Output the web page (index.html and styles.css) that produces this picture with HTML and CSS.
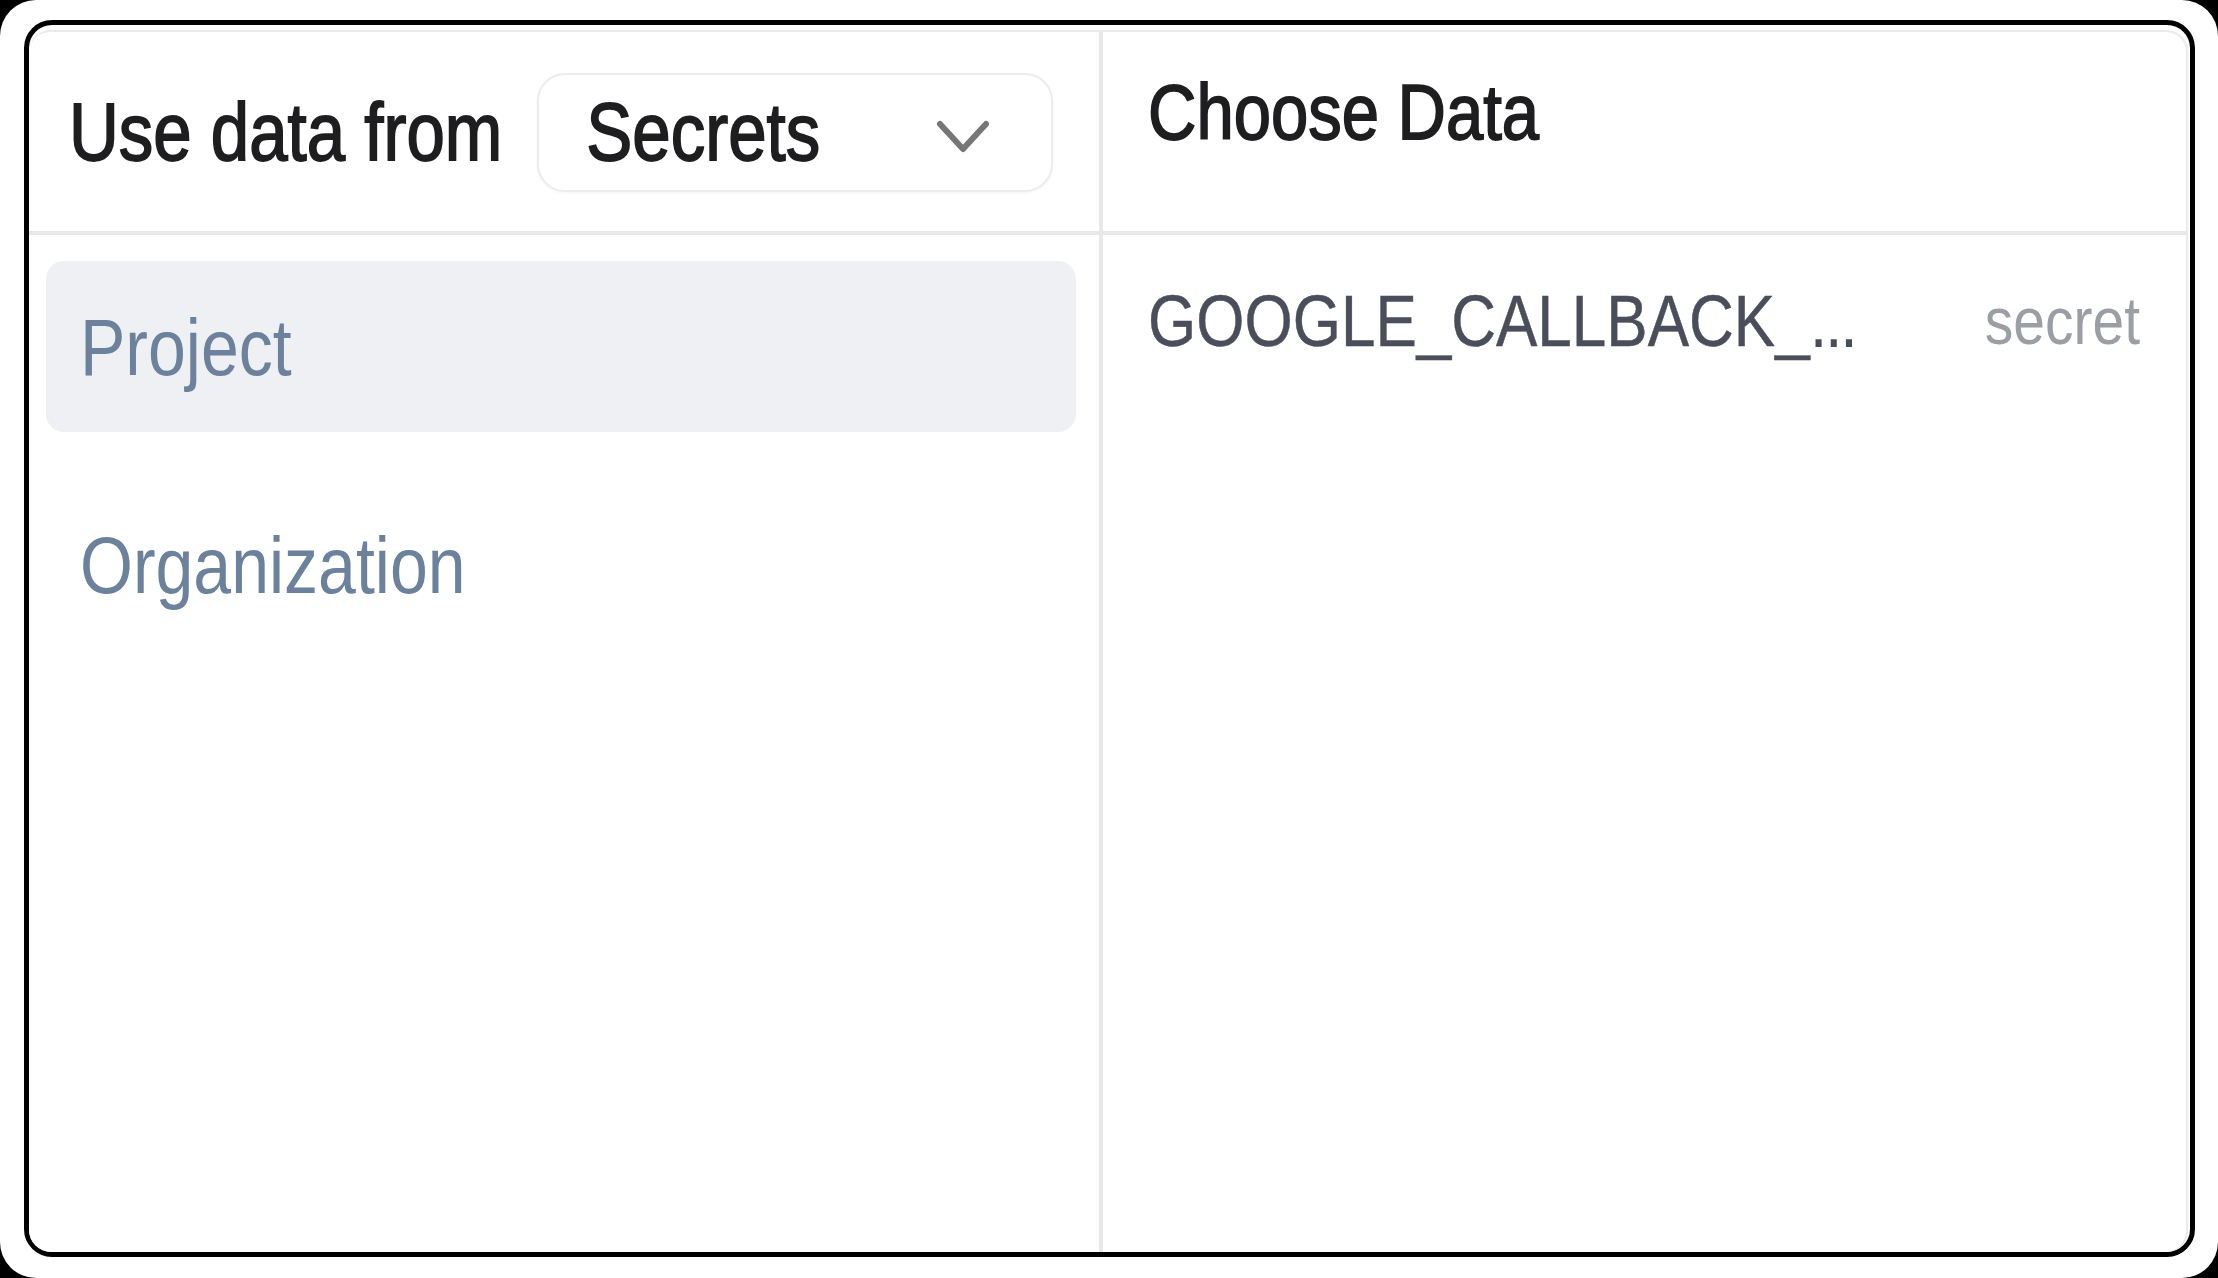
FILE: index.html
```html
<!DOCTYPE html>
<html lang="en">
<head>
<meta charset="utf-8">
<title>Choose Data</title>
<link rel="stylesheet" href="styles.css">
</head>
<body>
<div class="frame">
  <div class="outline">
    <div class="card">
      <div class="col col-left">
        <div class="head head-left">
          <span class="t label">Use data from</span>
          <div class="select">
            <span class="t select-value">Secrets</span>
            <svg class="chev" width="56" height="38" viewBox="0 0 56 38" aria-hidden="true">
              <polyline points="5,6 28,31 51,6" fill="none" stroke="#767678" stroke-width="6" stroke-linecap="round" stroke-linejoin="round"/>
            </svg>
          </div>
        </div>
        <div class="list">
          <div class="item active"><span class="t item-text">Project</span></div>
          <div class="item"><span class="t item-text">Organization</span></div>
        </div>
      </div>
      <div class="col col-right">
        <div class="head head-right">
          <span class="t title">Choose Data</span>
        </div>
        <div class="rows">
          <div class="row">
            <span class="t name">GOOGLE_CALLBACK_<span class="dots">…</span></span>
            <span class="t kind">secret</span>
          </div>
        </div>
      </div>
    </div>
  </div>
</div>
</body>
</html>
```

FILE: styles.css
```css
* { box-sizing: border-box; }

html, body {
  margin: 0;
  padding: 0;
  background: #000;
}

body {
  width: 2218px;
  height: 1278px;
  overflow: hidden;
  font-family: "Liberation Sans", Arial, sans-serif;
}

.frame {
  width: 2218px;
  height: 1278px;
  background: #fff;
  border-radius: 36px;
  padding: 20px 23px 21px 24px;
}

.outline {
  width: 100%;
  height: 100%;
  border: 5px solid #000;
  border-radius: 28px;
  padding: 5px 2px 0 0;
  background: #fff;
}

.card {
  width: 100%;
  height: 100%;
  border: 2px solid #ebebeb;
  border-left: none;
  border-bottom: none;
  border-radius: 22px;
  box-shadow: 0 0 3px rgba(0, 0, 0, 0.06);
  display: flex;
  overflow: hidden;
  background: #fff;
}

.col {
  display: flex;
  flex-direction: column;
  height: 100%;
}

.col-left {
  width: 1074px;
  flex: none;
  border-right: 4px solid #e8e8e8;
}

.col-right {
  flex: 1;
  min-width: 0;
}

.head {
  height: 203px;
  flex: none;
  border-bottom: 4px solid #e8e8e8;
  display: flex;
}

.t {
  display: inline-block;
  transform: scaleY(1.17);
  line-height: 1;
  white-space: nowrap;
}

.head-left {
  align-items: center;
  padding: 2px 0 0 40px;
}

.label {
  font-size: 69px;
  color: #1e1e20;
  -webkit-text-stroke: 1.5px #1e1e20;
}

.select {
  margin-left: 35px;
  width: 516px;
  height: 119px;
  border: 2px solid #ececec;
  border-radius: 28px;
  box-shadow: 0 1px 3px rgba(0, 0, 0, 0.05);
  display: flex;
  align-items: center;
  justify-content: space-between;
  padding: 0 60px 0 47px;
}

.select-value {
  font-size: 69px;
  color: #1e1e20;
  -webkit-text-stroke: 1.5px #1e1e20;
}

.chev {
  display: block;
  margin-top: 8px;
}

.head-right {
  align-items: flex-start;
  padding: 46px 0 0 45px;
}

.title {
  font-size: 67px;
  color: #1e1e20;
  -webkit-text-stroke: 1.5px #1e1e20;
}

.list {
  display: flex;
  flex-direction: column;
  gap: 47px;
  padding: 26px 23px 0 17px;
}

.item {
  height: 171px;
  border-radius: 18px;
  display: flex;
  align-items: center;
  padding-left: 34px;
}

.item.active {
  background: #eef0f3;
}

.item-text {
  font-size: 68px;
  color: #6b819c;
}

.rows {
  padding: 26px 46px 0 45px;
}

.row {
  height: 120px;
  display: flex;
  align-items: center;
  justify-content: space-between;
}

.name {
  font-size: 62px;
  color: #4a4e5b;
  -webkit-text-stroke: 0.4px #4a4e5b;
}

.dots {
  font-size: 48px;
  letter-spacing: -2px;
  -webkit-text-stroke: 1.5px #4a4e5b;
}

.kind {
  font-size: 57px;
  color: #9b9ea5;
}
```
